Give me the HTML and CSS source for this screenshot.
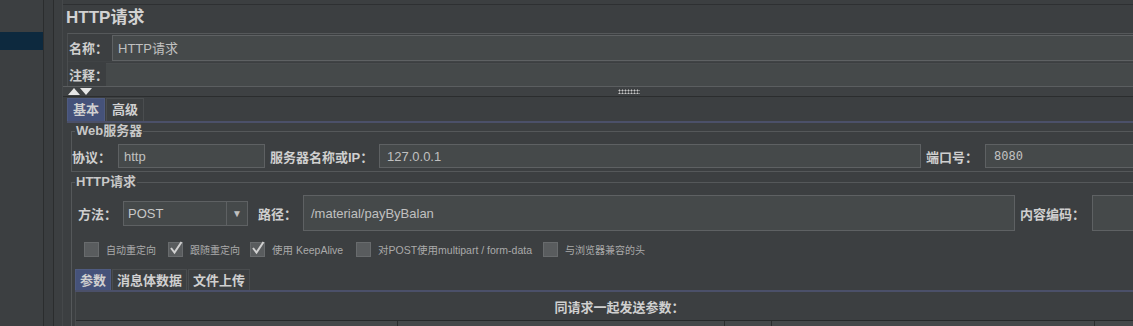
FILE: index.html
```html
<!DOCTYPE html>
<html>
<head>
    <title>HTTP请求</title>
    <link rel="stylesheet" href="styles.css">
</head>
<body>
<div class="app">
    <aside class="tree">
        <div class="tree-sel"></div>
    </aside>
    <div class="split"></div>

    <main class="panel">
        <div class="top-rule"></div>
        <h1 class="title">HTTP请求</h1>

        <div class="names">
            <div class="row row-name">
                <label class="name-lbl">名称：</label>
                <div class="field name-field">HTTP请求</div>
            </div>
            <div class="row row-comment">
                <label class="comment-lbl">注释：</label>
                <div class="field comment-field"></div>
            </div>
        </div>

        <div class="divider">
            <svg class="arrows" width="25" height="7" viewBox="0 0 25 7">
                <polygon points="0,7 6,0 12,7" fill="#e6e6e6"/>
                <polygon points="12,0 24,0 18,7" fill="#e6e6e6"/>
            </svg>
            <span class="grip"></span>
        </div>

        <div class="tabs">
            <span class="tab active">基本</span>
            <span class="tab">高级</span>
        </div>

        <div class="tab-body">
            <fieldset class="group web">
                <legend>Web服务器</legend>
                <div class="line">
                    <label class="lbl proto-lbl">协议：</label>
                    <div class="field proto">http</div>
                    <label class="lbl host-lbl">服务器名称或IP：</label>
                    <div class="field host">127.0.0.1</div>
                    <label class="lbl port-lbl">端口号：</label>
                    <div class="field port">8080</div>
                </div>
            </fieldset>

            <fieldset class="group http">
                <legend>HTTP请求</legend>
                <div class="line method-line">
                    <label class="lbl method-lbl">方法：</label>
                    <div class="combo">
                        <span class="combo-val">POST</span>
                        <span class="combo-btn">▼</span>
                    </div>
                    <label class="lbl path-lbl">路径：</label>
                    <div class="field path">/material/payByBalan</div>
                    <label class="lbl enc-lbl">内容编码：</label>
                    <div class="field enc"></div>
                </div>

                <div class="checks">
                    <span class="check c1"><span class="box"></span>自动重定向</span>
                    <span class="check c2"><span class="box on"><svg width="14" height="14" viewBox="0 0 14 14"><path d="M2 7 L5.5 11.5 L12.5 1" fill="none" stroke="#d0d0d0" stroke-width="2"/></svg></span>跟随重定向</span>
                    <span class="check c3"><span class="box on"><svg width="14" height="14" viewBox="0 0 14 14"><path d="M2 7 L5.5 11.5 L12.5 1" fill="none" stroke="#d0d0d0" stroke-width="2"/></svg></span>使用 KeepAlive</span>
                    <span class="check c4"><span class="box"></span>对POST使用multipart / form-data</span>
                    <span class="check c5"><span class="box"></span>与浏览器兼容的头</span>
                </div>

                <div class="subtabs">
                    <span class="tab active">参数</span>
                    <span class="tab">消息体数据</span>
                    <span class="tab">文件上传</span>
                </div>

                <div class="params">
                    <div class="params-title">同请求一起发送参数：</div>
                    <div class="thead">
                        <span class="th th1"></span>
                        <span class="th th2"></span>
                        <span class="th th3"></span>
                        <span class="th th4"></span>
                        <span class="th th5"></span>
                    </div>
                </div>
            </fieldset>
        </div>
    </main>
</div>
</body>
</html>
```

FILE: styles.css
```css
body {
    margin: 0;
    background-color: #3c3f41;
    color: #bbbbbb;
    font-family: "Liberation Sans", "Noto Sans CJK SC", sans-serif;
    font-size: 13px;
    overflow: hidden;
}

.app {
    display: flex;
    height: 326px;
}

/* left tree */
.tree {
    width: 43px;
    border-right: 1px solid #2b2d2e;
    padding-top: 32px;
}

.tree-sel {
    height: 18px;
    background-color: #0d293e;
}

.split {
    width: 9px;
    background-color: #3a3d3f;
    border-right: 1px solid #2b2d2e;
}

.panel {
    flex: 1;
    margin-left: 8px;
    border-left: 1px solid #45484a;
    min-width: 0;
}

.top-rule {
    height: 4px;
    border-bottom: 1px solid #2e3032;
}

.title {
    margin: 0;
    height: 28px;
    line-height: 26px;
    padding-left: 3px;
    font-size: 17px;
    font-weight: bold;
    color: #d2d2d2;
}

/* name / comment */
.names {
    margin-left: 4px;
    border-top: 1px solid #55585a;
    border-left: 1px solid #4a4d4f;
}

.row {
    display: flex;
    align-items: center;
}

.row label {
    font-weight: bold;
    color: #cfcfcf;
    padding-left: 1px;
    box-sizing: border-box;
    white-space: nowrap;
}

.name-lbl { width: 44px; }
.comment-lbl { width: 38px; }

.row-name {
    height: 27px;
}

.row-comment {
    height: 24px;
    border-top: 1px solid #404345;
}

.field {
    background-color: #45494a;
    border: 1px solid #5e6163;
    box-sizing: border-box;
    padding-left: 5px;
    color: #c0c0c0;
    display: flex;
    align-items: center;
    white-space: nowrap;
}

.name-field {
    flex: 1;
    height: 26px;
    border-right: none;
}

.comment-field {
    flex: 1;
    height: 23px;
    border: none;
    border-top: 1px solid #494c4e;
}

.divider {
    height: 9px;
    border-top: 1px solid #5b5e60;
    border-bottom: 1px solid #2b2d2e;
    background-color: #3e4143;
    display: flex;
    align-items: center;
}

.arrows {
    margin-left: 5px;
    display: block;
}

.grip {
    margin-left: 525px;
    width: 22px;
    height: 5px;
    background-image: radial-gradient(circle, #c8c8c8 0.8px, transparent 1.2px);
    background-size: 3px 3px;
}

/* tabs */
.tabs, .subtabs {
    display: flex;
    gap: 1px;
    border-bottom: 2px solid #4b5069;
}

.tabs {
    margin-left: 4px;
    margin-top: 1px;
    height: 23px;
}

.tab {
    padding: 0 5px;
    font-weight: bold;
    color: #d0d0d0;
    line-height: 22px;
    border: 1px solid #4a4d4f;
    border-bottom: none;
    background-color: #3c3f41;
}

.tab.active {
    background-color: #45527a;
    border-color: #4f5b80;
}

.tab-body {
    margin-left: 8px;
}

.group {
    margin: 0;
    padding: 0;
    border: 1px solid #55585a;
    border-right: none;
    min-width: 0;
}

.group legend {
    margin-left: 3px;
    padding: 0 1px;
    line-height: 16px;
    font-weight: bold;
    color: #c8c8c8;
}

.line {
    display: flex;
    align-items: center;
}

/* fixed label boxes keep the fields where the form puts them */
.lbl {
    font-weight: bold;
    color: #cfcfcf;
    white-space: nowrap;
    box-sizing: border-box;
    flex: none;
}

/* web server row */
.web .line {
    margin-top: 5px;
    margin-bottom: 3px;
    height: 24px;
}

.web .field {
    height: 24px;
}

.proto-lbl { width: 46px; }
.proto { width: 147px; }

.host-lbl { width: 114px; padding-left: 5px; }
.host { width: 542px; padding-left: 7px; }

.port-lbl { width: 64px; padding-left: 5px; }

.port {
    flex: 1;
    padding-left: 8px;
    font-family: "DejaVu Sans Mono", monospace;
    font-size: 12px;
    border-right: none;
}

.http {
    margin-top: 2px;
}

.method-line {
    margin-top: 5px;
    height: 36px;
}

.method-lbl { width: 51px; padding-left: 6px; }

.combo {
    width: 125px;
    height: 25px;
    display: flex;
    box-sizing: border-box;
    border: 1px solid #5e6163;
    background-color: #45494a;
}

.combo-val {
    flex: 1;
    padding-left: 4px;
    line-height: 23px;
    color: #c8c8c8;
}

.combo-btn {
    width: 20px;
    border-left: 1px solid #5e6163;
    font-size: 10px;
    text-align: center;
    line-height: 23px;
    color: #c0c0c0;
}

.path-lbl { width: 55px; padding-left: 10px; }

.path {
    width: 712px;
    height: 36px;
    padding-left: 7px;
}

.enc-lbl { width: 77px; padding-left: 5px; }

.enc {
    flex: 1;
    height: 36px;
    border-right: none;
}

/* checkboxes */
.checks {
    display: flex;
    margin-top: 11px;
    margin-left: 12px;
    height: 14px;
    align-items: center;
    font-size: 10px;
    color: #aaaaaa;
}

.check {
    display: flex;
    align-items: center;
    flex: none;
}

.c1 { width: 84px; }
.c2 { width: 82px; }
.c3 { width: 106px; }
.c4 { width: 187px; }

.c3, .c4 { font-size: 10.5px; }

.box {
    width: 13px;
    height: 13px;
    background-color: #595c5e;
    border: 1px solid #686b6d;
    margin-right: 7px;
    position: relative;
}

.box svg {
    position: absolute;
    left: 0;
    top: -2px;
}

.subtabs {
    margin-top: 13px;
    margin-left: 3px;
    height: 21px;
}

.subtabs .tab {
    line-height: 21px;
    padding: 0 4px;
}

.params {
    margin-left: 3px;
    border-left: 1px solid #4a4d4f;
}

.params-title {
    text-align: center;
    font-weight: bold;
    color: #d0d0d0;
    line-height: 18px;
    padding-top: 7px;
    padding-left: 30px;
}

.thead {
    display: flex;
    margin-top: 3px;
    height: 6px;
    border-top: 1px solid #27292a;
    background-color: #45484a;
}

.th {
    border-left: 1px solid #2b2d2e;
}

.th1 { width: 321px; border-left: none; }
.th2 { width: 326px; }
.th3 { width: 46px; }
.th4 { width: 322px; }
.th5 { flex: 1; }
```
